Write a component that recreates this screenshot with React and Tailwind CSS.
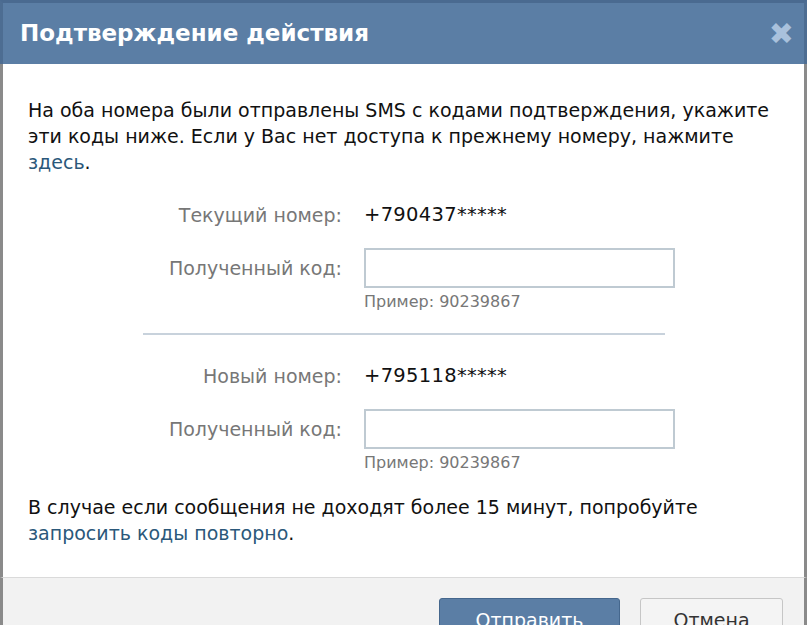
import React from 'react';

const font = { fontFamily: '"DejaVu Sans", "Liberation Sans", sans-serif' };

const CodeField = ({ label, number }) => (
  <div className="grid grid-cols-[314px_1fr] gap-x-[22px] items-center">
    <div className="text-right text-[#777] text-[19px] leading-[26px]">{label}</div>
    <div className="text-[#111] text-[19.5px] leading-[26px] tracking-[0.3px]">{number}</div>
    <div className="text-right text-[#777] text-[19px] leading-[26px] mt-[20px]">Полученный код:</div>
    <div className="mt-[20px] h-[40px] w-[311px] border-2 border-[#bfcad2] bg-white" />
    <div />
    <div className="text-[#777] text-[16px] leading-[20px] mt-[4px]">Пример: 90239867</div>
  </div>
);

const App = () => (
  <div className="w-[807px] h-[625px] overflow-hidden bg-white" style={font}>
    <div className="h-[64px] bg-[#5b7ea5] border-t-[3px] border-[#4a6a90] border-x-[3px] border-x-[#4d6d92] flex items-center justify-between pl-[17px] pr-[10px]">
      <h1 className="text-white text-[23px] font-bold">Подтверждение действия</h1>
      <span className="text-[#a9c1dc] text-[30px] font-bold leading-none">✖</span>
    </div>
    <div className="border-x-[3px] border-[#8a8a8a] h-[513px] pt-[33px] pl-[25px] pr-[20px]">
      <p className="text-[19px] leading-[26px] text-[#111]">
        На оба номера были отправлены SMS с кодами подтверждения, укажите эти коды ниже. Если у Вас нет доступа к прежнему номеру, нажмите <span className="text-[#2b587a]">здесь</span>.
      </p>
      <div className="mt-[27px]">
        <CodeField label="Текущий номер:" number="+790437*****" />
      </div>
      <div className="ml-[115px] w-[522px] h-[2px] bg-[#c8d2dc] mt-[21px] mb-[28px]" />
      <CodeField label="Новый номер:" number="+795118*****" />
      <p className="text-[19px] leading-[26px] text-[#111] mt-[21px]">
        В случае если сообщения не доходят более 15 минут, попробуйте<br />
        <span className="text-[#2b587a]">запросить коды повторно</span>.
      </p>
    </div>
    <div className="h-[48px] bg-[#f2f2f2] border-t border-[#dadada] border-x-[3px] border-x-[#8a8a8a] flex justify-end items-start pt-[20px] pr-[21px] gap-[20px]">
      <button className="w-[181px] h-[40px] bg-[#5b7ea5] border border-[#45678d] rounded-[3px] text-white text-[19px] pt-[4px]">Отправить</button>
      <button className="w-[143px] h-[40px] bg-[#f4f4f4] border border-[#c6c6c6] rounded-[3px] text-[#333] text-[19px] pt-[4px]">Отмена</button>
    </div>
  </div>
);

export default App;
